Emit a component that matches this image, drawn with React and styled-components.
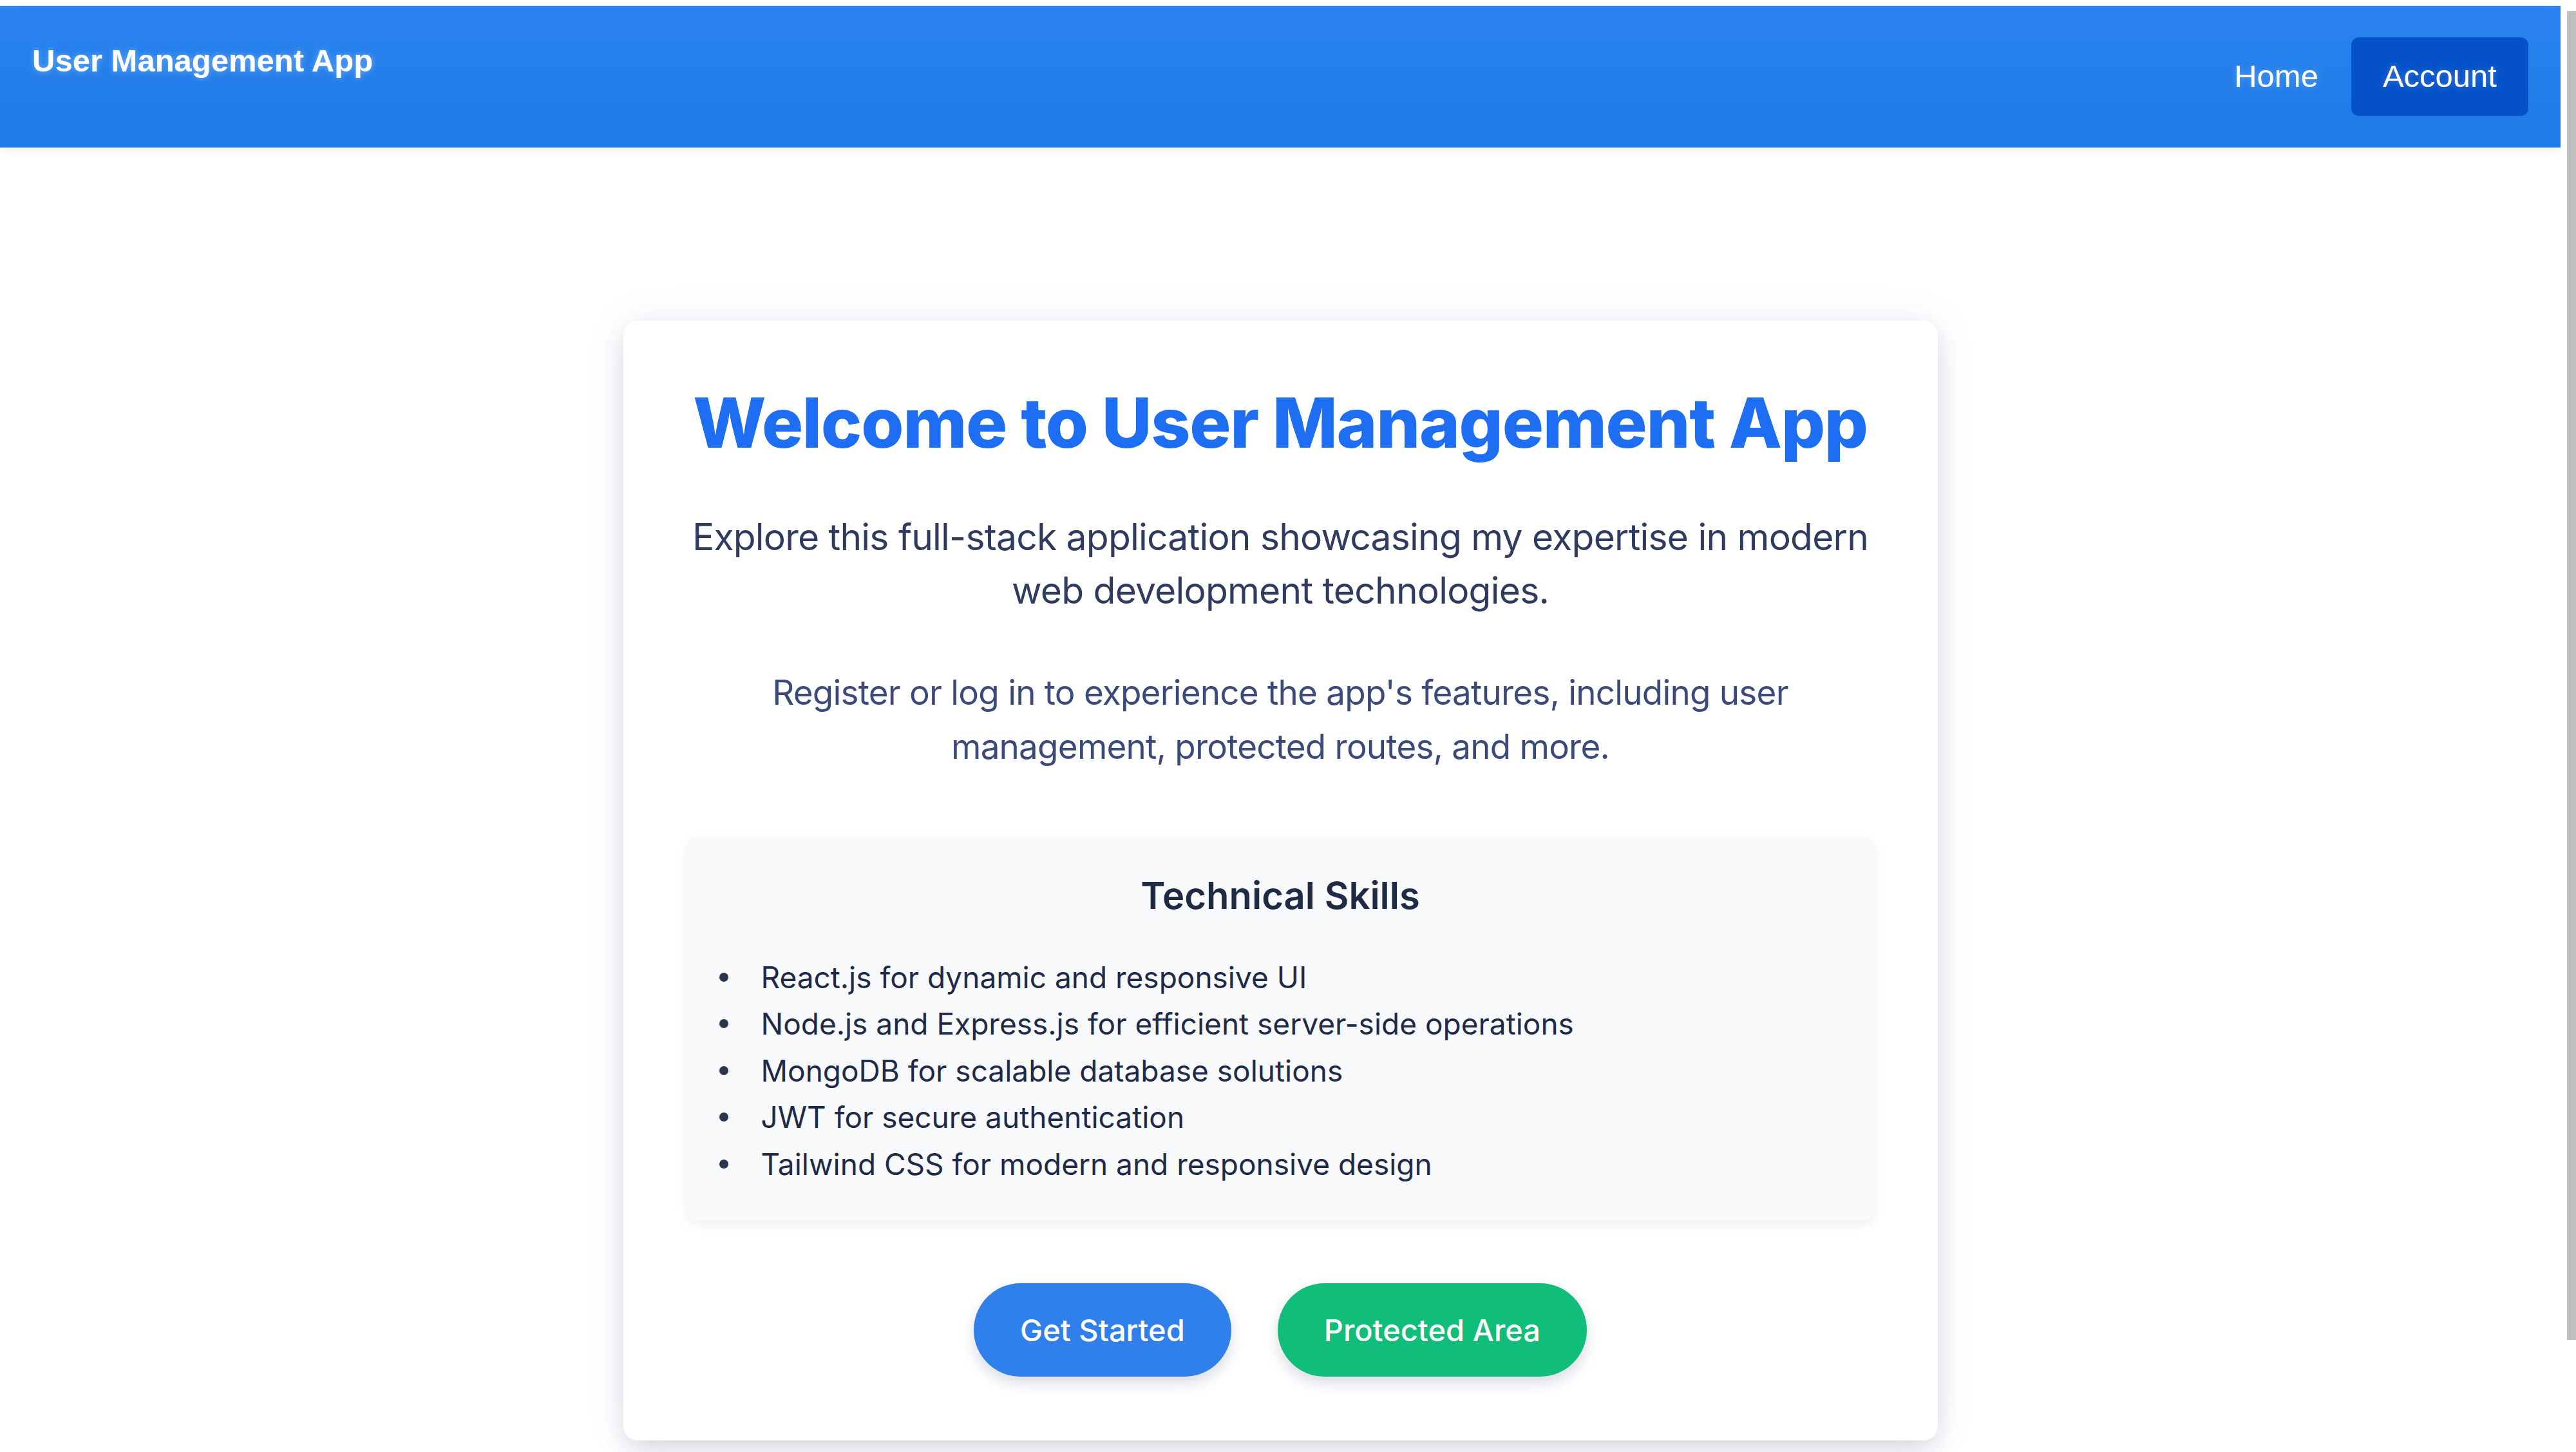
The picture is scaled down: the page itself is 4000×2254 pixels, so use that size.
import React from "react";
import styled, { createGlobalStyle } from "styled-components";

const GlobalStyle = createGlobalStyle`
  html, body {
    margin: 0;
    padding: 0;
    overflow: hidden;
    background: #ffffff;
  }
  * {
    box-sizing: border-box;
  }
`;

const Screen = styled.div`
  display: flex;
  height: 100vh;
  overflow: hidden;
  background: #ffffff;
  font-family: Inter, "Noto Sans", sans-serif;
`;

const Content = styled.div`
  flex: 1;
  min-width: 0;
  padding-top: 9px;
`;

const ScrollTrack = styled.div`
  width: 24px;
  flex-shrink: 0;
  padding: 17px 0 0 10px;
  background: #ffffff;
`;

const ScrollThumb = styled.div`
  height: 2063px;
  background: #bfbfbf;
`;

const Header = styled.header`
  display: flex;
  justify-content: space-between;
  align-items: flex-start;
  padding: 49px 50px;
  background: linear-gradient(180deg, #2a83ee 0%, #1f7be8 100%);
  box-shadow: 0 6px 16px rgba(30, 60, 120, 0.08);
`;

const Brand = styled.div`
  font-family: "Liberation Sans", Arial, sans-serif;
  font-weight: 700;
  font-size: 49px;
  line-height: 1.5;
  color: #ffffff;
  text-shadow: 0 0 10px rgba(255, 255, 255, 0.35);
`;

const Nav = styled.nav`
  display: flex;
  align-items: center;
  gap: 2px;
`;

const NavLink = styled.a`
  padding: 24px 49px;
  border-radius: 12px;
  font-family: "Liberation Sans", Arial, sans-serif;
  font-size: 49px;
  line-height: 1.5;
  color: #ffffff;
  text-decoration: none;
  background: ${props => (props.$active ? "#0551c9" : "transparent")};
  text-shadow: 0 0 10px rgba(255, 255, 255, 0.25);
  cursor: pointer;
`;

const Main = styled.main`
  display: flex;
  justify-content: center;
  padding: 269px 0 230px;
`;

const Card = styled.section`
  width: 2041px;
  padding: 99px 100px;
  background: #ffffff;
  border-radius: 22px;
  text-align: center;
  box-shadow: 0 18px 40px -6px rgba(20, 30, 60, 0.14),
    0 0 60px rgba(60, 90, 160, 0.1);
`;

const Title = styled.h1`
  margin: 0 0 76px;
  font-size: 107px;
  font-weight: 800;
  line-height: 119px;
  letter-spacing: -1.3px;
  color: #1d6ef2;
`;

const Lead = styled.p`
  margin: 0 0 ${props => props.$after}px;
  font-size: ${props => props.$size}px;
  line-height: ${props => props.$lh}px;
  letter-spacing: -0.8px;
  color: ${props => props.$color};
`;

const SkillsBox = styled.div`
  margin-top: 98px;
  padding: 51px 49px;
  background: #f8f9fb;
  border-radius: 14px;
  text-align: left;
  box-shadow: 0 6px 18px rgba(20, 30, 60, 0.07);
`;

const SkillsTitle = styled.h2`
  margin: 0 0 50px;
  text-align: center;
  font-size: 58px;
  font-weight: 600;
  line-height: 81px;
  color: #1f2a44;
`;

const SkillList = styled.ul`
  margin: 0;
  padding: 0;
  list-style: none;
`;

const Skill = styled.li`
  display: flex;
  align-items: center;
  font-size: 46px;
  line-height: 72.5px;
  color: #1e2a4a;

  &::before {
    content: "";
    width: 14px;
    height: 14px;
    margin-right: 51px;
    border-radius: 50%;
    background: #2a3550;
    flex-shrink: 0;
  }
`;

const Actions = styled.div`
  display: flex;
  justify-content: center;
  gap: 72px;
  margin-top: 98px;
`;

const ActionButton = styled.button`
  padding: 38px 72px;
  border: none;
  border-radius: 9999px;
  font-family: Inter, "Noto Sans", sans-serif;
  font-size: 47px;
  font-weight: 500;
  line-height: 69px;
  color: #ffffff;
  background: ${props => props.$bg};
  box-shadow: 0 10px 22px rgba(20, 40, 80, 0.16);
  cursor: pointer;
`;

const skills = [
  "React.js for dynamic and responsive UI",
  "Node.js and Express.js for efficient server-side operations",
  "MongoDB for scalable database solutions",
  "JWT for secure authentication",
  "Tailwind CSS for modern and responsive design"
];

const App = () => (
  <>
    <GlobalStyle />
    <Screen>
      <Content>
        <Header>
          <Brand>User Management App</Brand>
          <Nav>
            <NavLink>Home</NavLink>
            <NavLink $active>Account</NavLink>
          </Nav>
        </Header>
        <Main>
          <Card>
            <Title>Welcome to User Management App</Title>
            <Lead $size={57} $lh={83} $after={75} $color="#2f3b5f">
              Explore this full-stack application showcasing my expertise in modern
              web development technologies.
            </Lead>
            <Lead $size={53} $lh={84} $after={0} $color="#3b4a78">
              Register or log in to experience the app's features, including user
              management, protected routes, and more.
            </Lead>
            <SkillsBox>
              <SkillsTitle>Technical Skills</SkillsTitle>
              <SkillList>
                {skills.map(s => (
                  <Skill key={s}>{s}</Skill>
                ))}
              </SkillList>
            </SkillsBox>
            <Actions>
              <ActionButton $bg="#2f80ea">Get Started</ActionButton>
              <ActionButton $bg="#10bd7a">Protected Area</ActionButton>
            </Actions>
          </Card>
        </Main>
      </Content>
      <ScrollTrack>
        <ScrollThumb />
      </ScrollTrack>
    </Screen>
  </>
);

export default App;
